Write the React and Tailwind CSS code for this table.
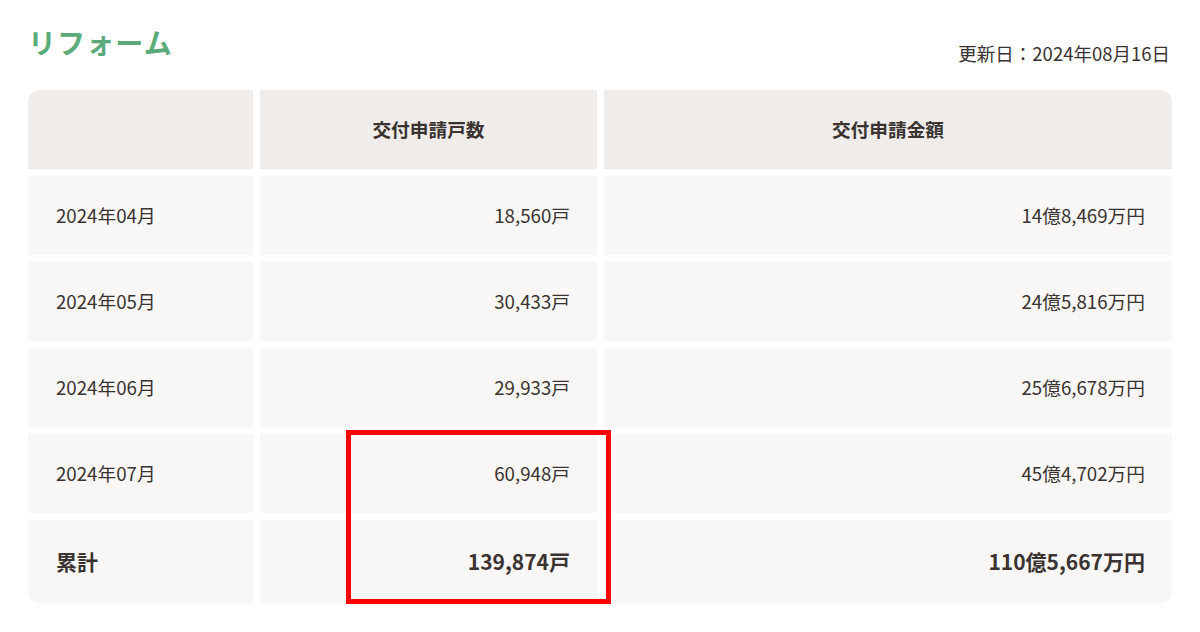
import React from 'react';

const rows = [
  { month: '2024年04月', count: '18,560戸', amount: '14億8,469万円' },
  { month: '2024年05月', count: '30,433戸', amount: '24億5,816万円' },
  { month: '2024年06月', count: '29,933戸', amount: '25億6,678万円' },
  { month: '2024年07月', count: '60,948戸', amount: '45億4,702万円' },
];

const font = { fontFamily: '"Noto Sans CJK JP", "Noto Sans", sans-serif' };

export default function App() {
  return (
    <div className="w-[1200px] h-[632px] bg-white text-[#3a3331]" style={font}>
      <div className="px-[28px] pt-[22px]">
        <div className="flex items-end justify-between">
          <h2 className="text-[28px] font-bold leading-[40px] text-[#5aab79] tracking-[0.04em]">リフォーム</h2>
          <p className="text-[18.5px] leading-[24px] mr-[2px] mb-[-3px]">更新日：2024年08月16日</p>
        </div>

        <div className="relative mt-[28px]">
          <div className="grid grid-cols-[225px_337px_1fr] gap-[7px] text-[18.7px]">
            <div className="h-[79px] bg-[#efecea] rounded-tl-[12px]" />
            <div className="h-[79px] bg-[#efecea] flex items-center justify-center font-bold">交付申請戸数</div>
            <div className="h-[79px] bg-[#efecea] rounded-tr-[12px] flex items-center justify-center font-bold">交付申請金額</div>

            {rows.map(r => (
              <React.Fragment key={r.month}>
                <div className="h-[79px] bg-[#f8f7f5] flex items-center pl-[28px]">{r.month}</div>
                <div className="h-[79px] bg-[#f8f7f5] flex items-center justify-end pr-[27px]">{r.count}</div>
                <div className="h-[79px] bg-[#f8f7f5] flex items-center justify-end pr-[27px]">{r.amount}</div>
              </React.Fragment>
            ))}

            <div className="h-[83px] bg-[#f8f7f5] rounded-bl-[12px] flex items-center pl-[28px] font-bold text-[21px]">累計</div>
            <div className="h-[83px] bg-[#f8f7f5] flex items-center justify-end pr-[27px] font-bold text-[21px]">139,874戸</div>
            <div className="h-[83px] bg-[#f8f7f5] rounded-br-[12px] flex items-center justify-end pr-[27px] font-bold text-[21px]">110億5,667万円</div>
          </div>

          <div className="absolute left-[318px] top-[340px] w-[265px] h-[174px] border-[5px] border-[#ff0000]" />
        </div>
      </div>
    </div>
  );
}
